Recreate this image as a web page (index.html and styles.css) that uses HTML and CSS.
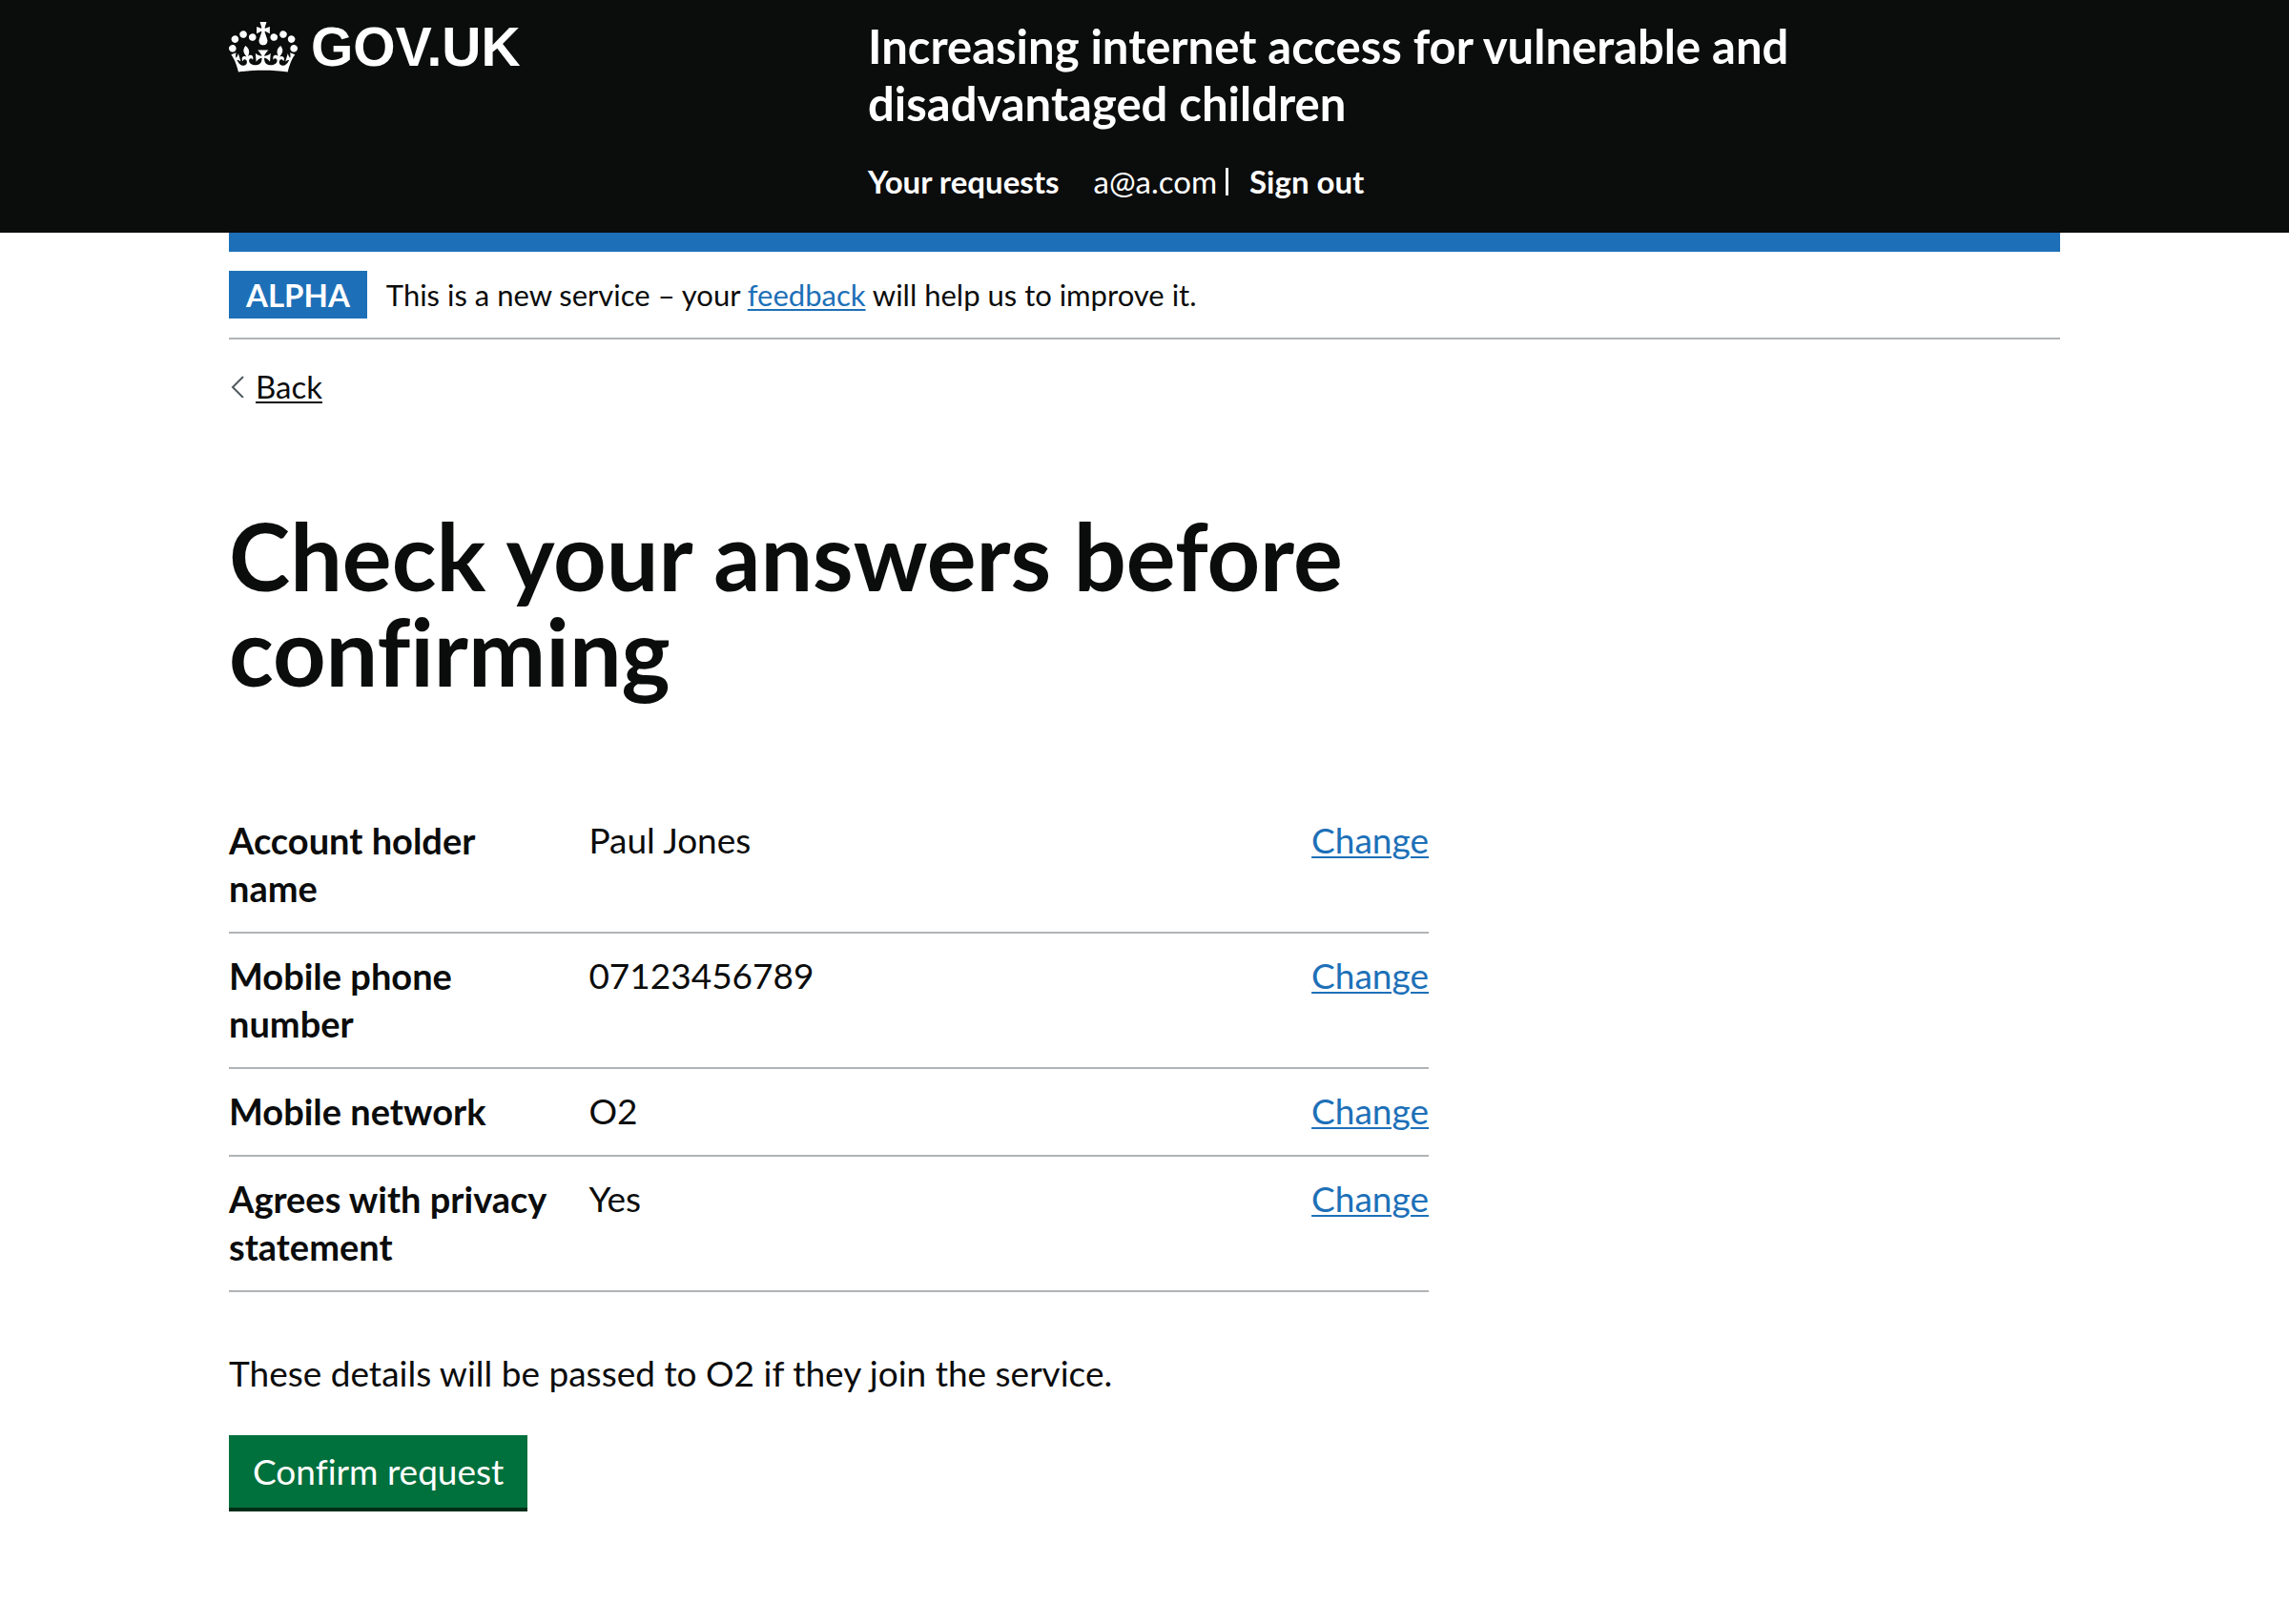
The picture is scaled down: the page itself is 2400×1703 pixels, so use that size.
FILE: index.html
```html
<!DOCTYPE html>
<html lang="en">
<head>
<meta charset="utf-8">
<meta name="viewport" content="width=device-width, initial-scale=1">
<title>Check your answers before confirming – GOV.UK</title>
<link rel="stylesheet" href="styles.css">
</head>
<body>
<header class="header">
  <div class="container header-grid">
    <a class="logo" href="#">
      <svg class="crown" viewBox="0 0 132 97" aria-hidden="true"><path fill="currentColor" fill-rule="evenodd" d="M25 30.2c3.5 1.5 7.7-.2 9.1-3.7 1.5-3.6-.2-7.8-3.9-9.2-3.6-1.4-7.6.3-9.1 3.9-1.4 3.5.3 7.5 3.9 9zM9 39.5c3.6 1.5 7.8-.2 9.2-3.7 1.5-3.6-.2-7.8-3.9-9.1-3.6-1.5-7.6.2-9.1 3.8-1.4 3.5.3 7.5 3.8 9zM4.4 57.2c3.5 1.5 7.7-.2 9.1-3.8 1.5-3.6-.2-7.7-3.9-9.1-3.5-1.5-7.6.3-9.1 3.8-1.4 3.5.3 7.6 3.9 9.1zm38.3-21.4c3.5 1.5 7.7-.2 9.1-3.8 1.5-3.6-.2-7.7-3.9-9.1-3.6-1.5-7.6.3-9.1 3.8-1.3 3.6.4 7.7 3.9 9.1zm64.4-5.6c-3.6 1.5-7.8-.2-9.1-3.7-1.5-3.6.2-7.8 3.8-9.2 3.6-1.4 7.7.3 9.2 3.9 1.3 3.5-.4 7.5-3.9 9zm15.9 9.3c-3.6 1.5-7.7-.2-9.1-3.7-1.5-3.6.2-7.8 3.7-9.1 3.6-1.5 7.7.2 9.2 3.8 1.5 3.5-.3 7.5-3.8 9zm4.7 17.7c-3.6 1.5-7.8-.2-9.2-3.8-1.5-3.6.2-7.7 3.9-9.1 3.6-1.5 7.7.3 9.2 3.8 1.3 3.5-.4 7.6-3.9 9.1zM89.3 35.8c-3.6 1.5-7.8-.2-9.2-3.8-1.4-3.6.2-7.7 3.9-9.1 3.6-1.5 7.7.3 9.2 3.8 1.4 3.6-.3 7.7-3.9 9.1zM69.7 17.7l8.9 4.7V9.3l-8.9 2.8c-.2-.3-.5-.6-.9-.9L72.4 0H59.6l3.5 11.2c-.3.3-.6.5-.9.9l-8.8-2.8v13.1l8.8-4.7c.3.3.6.7.9.9l-5 15.4v.1c-.2.8-.4 1.6-.4 2.4 0 4.1 3.1 7.5 7 8.1h.2c.3 0 .7.1 1 .1.4 0 .7 0 1-.1h.2c4-.6 7.1-4.1 7.1-8.1 0-.8-.1-1.7-.4-2.4V34l-5.1-15.4c.4-.2.7-.6 1-.9zM66 92.8c16.9 0 32.8 1.1 47.1 3.2 4-16.9 8.9-26.7 14-33.5l-9.6-3.4c1 4.9 1.1 7.2 0 10.2-1.5-1.4-3-4.3-4.2-8.7L108.6 76c2.8-2 5-3.2 7.5-3.3-4.4 9.4-10 11.9-13.6 11.2-4.3-.8-6.3-4.6-5.6-7.9 1-4.7 5.7-5.9 8-.5 4.3-8.7-3-11.4-7.6-8.8 7.1-7.2 7.9-13.5 2.1-21.1-8 6.1-8.1 12.3-4.5 20.8-4.7-5.4-12.1-2.5-9.5 6.2 3.4-5.2 7.9-2 7.2 3.1-.6 4.3-6.4 7.8-13.5 7.2-10.3-.9-10.9-8-11.2-13.8 2.5-.5 7.1 1.8 11 7.3L80.2 60c-4.1 4.4-8 5.3-12.3 5.4 1.4-4.4 8-11.6 8-11.6H55.5s6.4 7.2 7.9 11.6c-4.2-.1-8-1-12.3-5.4l1.4 16.4c3.9-5.5 8.5-7.7 10.9-7.3-.3 5.8-.9 12.8-11.1 13.8-7.2.6-12.9-2.9-13.5-7.2-.7-5 3.8-8.3 7.1-3.1 2.7-8.7-4.6-11.6-9.4-6.2 3.7-8.5 3.6-14.7-4.6-20.8-5.8 7.6-5 13.9 2.2 21.1-4.7-2.6-11.9.1-7.7 8.8 2.3-5.5 7.1-4.2 8.1.5.7 3.3-1.3 7.1-5.7 7.9-3.5.7-9-1.8-13.5-11.2 2.5.1 4.7 1.3 7.5 3.3l-4.7-15.4c-1.2 4.4-2.7 7.2-4.3 8.7-1.1-3-.9-5.3 0-10.2l-9.5 3.4c5 6.9 9.9 16.7 14 33.5 14.8-2.1 30.8-3.2 47.7-3.2z"/></svg>
      <span>GOV.UK</span>
    </a>
    <div>
      <a class="service-name" href="#">Increasing internet access for vulnerable and disadvantaged children</a>
      <nav class="nav" aria-label="Account">
        <a class="nav-link" href="#">Your requests</a>
        <span class="nav-user">a@a.com</span>
        <a class="nav-link" href="#">Sign out</a>
      </nav>
    </div>
  </div>
</header>

<div class="container">
  <div class="phase-banner">
    <strong class="tag">ALPHA</strong>
    <span>This is a new service – your <a class="link" href="#">feedback</a> will help us to improve it.</span>
  </div>
  <a class="back-link" href="#">
    <svg class="chevron" viewBox="0 0 16 24" aria-hidden="true"><path d="M15 2 4 13l11 11" fill="none" stroke="#505a5f" stroke-width="2"/></svg>
    <span class="back-text">Back</span>
  </a>

  <main class="main">
    <h1 class="heading">Check your answers before confirming</h1>
    <dl class="summary">
      <div class="row">
        <dt class="key">Account holder name</dt>
        <dd class="value">Paul Jones</dd>
        <dd class="action"><a class="link" href="#">Change</a></dd>
      </div>
      <div class="row">
        <dt class="key">Mobile phone number</dt>
        <dd class="value">07123456789</dd>
        <dd class="action"><a class="link" href="#">Change</a></dd>
      </div>
      <div class="row">
        <dt class="key">Mobile network</dt>
        <dd class="value">O2</dd>
        <dd class="action"><a class="link" href="#">Change</a></dd>
      </div>
      <div class="row">
        <dt class="key">Agrees with privacy statement</dt>
        <dd class="value">Yes</dd>
        <dd class="action"><a class="link" href="#">Change</a></dd>
      </div>
    </dl>
    <p class="note">These details will be passed to O2 if they join the service.</p>
    <button class="button" type="submit">Confirm request</button>
  </main>
</div>
</body>
</html>
```
FILE: styles.css
```css
* { box-sizing: border-box; }

body {
  margin: 0;
  background: #fff;
  color: #0b0c0c;
  font-family: Lato, "Liberation Sans", sans-serif;
  font-size: 37px;
  font-variant-ligatures: none;
  line-height: 50px;
}

.container {
  max-width: 1920px;
  width: calc(100% - 60px);
  margin: 0 auto;
}

.link {
  color: #1d70b8;
  text-decoration-thickness: 2px;
  text-underline-offset: 3px;
}

/* Header */
.header {
  background: #0b0c0c;
  color: #fff;
}

.header-grid {
  display: grid;
  grid-template-columns: 1fr 2fr;
  gap: 45px;
  padding: 18px 0 34px;
}

.logo {
  display: flex;
  align-items: flex-start;
  gap: 14px;
  color: #fff;
  font: bold 57px/62px "Liberation Sans", sans-serif;
  text-decoration: none;
}

.crown {
  width: 72px;
  height: 53px;
  margin-top: 5px;
}

.service-name {
  display: block;
  color: #fff;
  font-size: 49px;
  font-weight: 700;
  line-height: 60px;
  text-decoration: none;
}

.nav {
  display: flex;
  align-items: center;
  margin-top: 32px;
  font-size: 33px;
  line-height: 40px;
}

.nav-link {
  color: #fff;
  font-weight: 700;
  text-decoration: none;
}

.nav-user {
  margin: 0 22px 0 36px;
  padding-right: 12px;
  background: linear-gradient(#fff, #fff) right center / 3px 29px no-repeat;
}

/* Phase banner */
.phase-banner {
  display: flex;
  align-items: center;
  gap: 20px;
  padding: 20px 0;
  border-top: 20px solid #1d70b8;
  border-bottom: 2px solid #b1b4b6;
  font-size: 31px;
}

.tag {
  padding: 1px 18px;
  background: #1d70b8;
  color: #fff;
  font-size: 33px;
  line-height: 48px;
}

.back-link {
  display: inline-flex;
  align-items: center;
  gap: 12px;
  margin-top: 29px;
  color: #0b0c0c;
  font-size: 33px;
  line-height: 40px;
  text-decoration: none;
}

.back-text {
  text-decoration: underline 2px;
  text-underline-offset: 3px;
}

.chevron {
  width: 16px;
  height: 24px;
}

/* Content */
.main {
  max-width: 1258px;
  padding: 105px 0 100px;
}

.heading {
  margin: 0 0 104px;
  font-size: 97px;
  line-height: 100px;
}

.summary { margin: 0; }

.row {
  display: grid;
  grid-template-columns: 3fr 5fr 2fr;
  padding: 19px 0 21px;
  border-bottom: 2px solid #b1b4b6;
}

.key {
  padding-right: 20px;
  font-size: 38px;
  font-weight: 700;
}

.value { margin: 0; }

.action {
  margin: 0;
  text-align: right;
}

.note { margin: 60px 0 40px; }

.button {
  display: block;
  padding: 13px 25px;
  border: 0;
  background: #00703c;
  box-shadow: 0 4px 0 #002d18;
  color: #fff;
  font: inherit;
}
```
